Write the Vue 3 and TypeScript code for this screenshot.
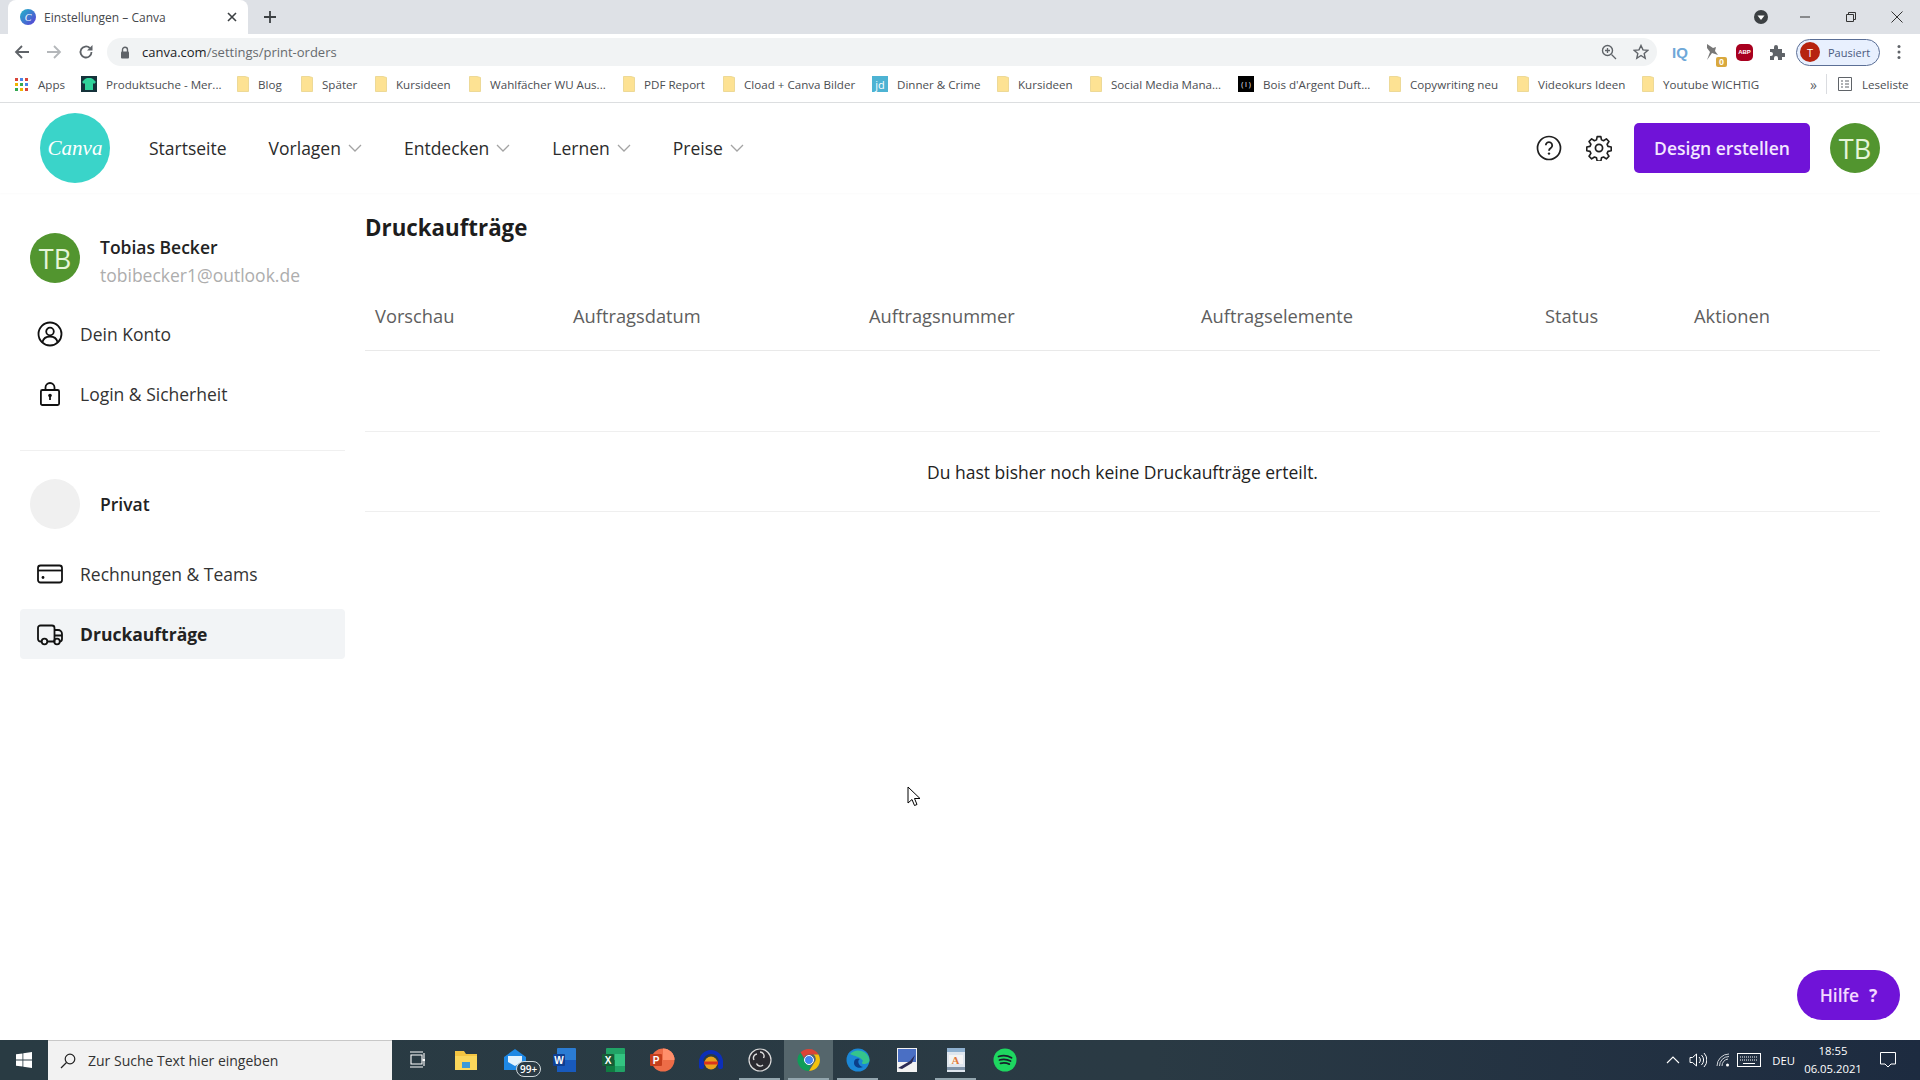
<script setup lang="ts">
const bookmarks = [
  { label: "Apps", icon: "apps", w: 66 },
  { label: "Produktsuche - Mer...", icon: "shirt", w: 156 },
  { label: "Blog", icon: "folder", w: 64 },
  { label: "Später", icon: "folder", w: 74 },
  { label: "Kursideen", icon: "folder", w: 94 },
  { label: "Wahlfächer WU Aus...", icon: "folder", w: 154 },
  { label: "PDF Report", icon: "folder", w: 100 },
  { label: "Cload + Canva Bilder", icon: "folder", w: 149 },
  { label: "Dinner & Crime", icon: "jd", w: 125 },
  { label: "Kursideen", icon: "folder", w: 93 },
  { label: "Social Media Mana...", icon: "folder", w: 148 },
  { label: "Bois d'Argent Duft...", icon: "bois", w: 151 },
  { label: "Copywriting neu", icon: "folder", w: 128 },
  { label: "Videokurs Ideen", icon: "folder", w: 125 },
  { label: "Youtube WICHTIG", icon: "folder", w: 160 },
];

const appDots = ["#d9453a", "#4a86e8", "#d9453a", "#f1b500", "#34a853", "#4a86e8", "#34a853", "#f1b500", "#d9453a"];

const navItems = [
  { label: "Startseite", caret: false },
  { label: "Vorlagen", caret: true },
  { label: "Entdecken", caret: true },
  { label: "Lernen", caret: true },
  { label: "Preise", caret: true },
];

const columns = ["Vorschau", "Auftragsdatum", "Auftragsnummer", "Auftragselemente", "Status", "Aktionen"];
</script>

<template>
  <div class="screen">
    <!-- Browser chrome -->
    <div class="tabstrip">
      <div class="tab">
        <span class="favicon">C</span>
        <span class="tab-title">Einstellungen – Canva</span>
        <svg class="tab-close" width="10" height="10" viewBox="0 0 10 10">
          <path d="M1 1l8 8M9 1l-8 8" stroke="#3c4043" stroke-width="1.6" />
        </svg>
      </div>
      <svg class="tab-plus" width="14" height="14" viewBox="0 0 14 14">
        <path d="M7 1v12M1 7h12" stroke="#3c4043" stroke-width="1.8" />
      </svg>
      <div class="win-controls">
        <svg width="16" height="16" viewBox="0 0 16 16">
          <circle cx="8" cy="8" r="7" fill="#3c4043" />
          <path d="M4.5 6.5h7L8 11z" fill="#fff" />
        </svg>
        <svg class="win-min" width="12" height="12" viewBox="0 0 12 12">
          <path d="M1 6h10" stroke="#333" stroke-width="1" />
        </svg>
        <svg class="win-max" width="12" height="12" viewBox="0 0 12 12">
          <path d="M1.5 3.5h7v7h-7zM3.5 3.5v-2h7v7h-2" fill="none" stroke="#333" stroke-width="1" />
        </svg>
        <svg class="win-close" width="14" height="14" viewBox="0 0 14 14">
          <path d="M1.5 1.5l11 11M12.5 1.5l-11 11" stroke="#333" stroke-width="1" />
        </svg>
      </div>
    </div>

    <div class="toolbar">
      <svg class="tool-btn" width="16" height="16" viewBox="0 0 16 16">
        <path d="M15 8H2M8 2L2 8l6 6" fill="none" stroke="#5f6368" stroke-width="1.8" />
      </svg>
      <svg class="tool-btn" width="16" height="16" viewBox="0 0 16 16">
        <path d="M1 8h13M8 2l6 6-6 6" fill="none" stroke="#b4b7ba" stroke-width="1.8" />
      </svg>
      <svg class="tool-btn" width="16" height="16" viewBox="0 0 16 16">
        <path d="M13.5 8A5.5 5.5 0 1 1 11.8 4" fill="none" stroke="#5f6368" stroke-width="1.8" />
        <path d="M14.5 1v5.5H9z" fill="#5f6368" />
      </svg>
      <div class="omnibox">
        <svg width="10" height="13" viewBox="0 0 10 13">
          <path d="M2.5 6V3.8a2.5 2.5 0 0 1 5 0V6" fill="none" stroke="#5f6368" stroke-width="1.4" />
          <rect x="1" y="5.5" width="8" height="7" rx="1" fill="#5f6368" />
        </svg>
        <span class="url"><b>canva.com</b>/settings/print-orders</span>
        <svg class="omni-zoom" width="16" height="16" viewBox="0 0 16 16">
          <circle cx="6.5" cy="6.5" r="5" fill="none" stroke="#5f6368" stroke-width="1.4" />
          <path d="M10.5 10.5L15 15M4 6.5h5M6.5 4v5" stroke="#5f6368" stroke-width="1.3" />
        </svg>
        <svg width="16" height="16" viewBox="0 0 16 16">
          <path d="M8 1.5l2 4.4 4.7.5-3.5 3.2 1 4.7L8 11.500l-4.200 2.800 1-4.700L1.300 6.400l4.700-.5z" fill="none" stroke="#5f6368" stroke-width="1.4" />
        </svg>
      </div>
      <span class="ext-iq">IQ</span>
      <div class="ext-pin">
        <svg width="16" height="18" viewBox="0 0 16 18">
          <path d="M3 1l6 4 3-1-1 4 3 4-6-2-5 7 3-8-3-4z" fill="#777" />
        </svg>
        <span class="ext-badge">0</span>
      </div>
      <span class="ext-abp">ABP</span>
      <svg class="ext-puzzle" width="16" height="16" viewBox="0 0 16 16">
        <path d="M1 5h4V3a2 2 0 0 1 4 0v2h4v4h2a2 2 0 0 1 0 4h-2v3H9v-2a2 2 0 0 0-4 0v2H1v-4h1a2 2 0 0 0 0-4H1z" fill="#5f6368" />
      </svg>
      <div class="profile">
        <span class="profile-pic">T</span>
        <span class="profile-label">Pausiert</span>
      </div>
      <svg class="menu-dots" width="4" height="16" viewBox="0 0 4 16">
        <circle cx="2" cy="2.500" r="1.500" fill="#5f6368" />
        <circle cx="2" cy="8" r="1.500" fill="#5f6368" />
        <circle cx="2" cy="13.500" r="1.500" fill="#5f6368" />
      </svg>
    </div>

    <div class="bookmarks">
      <div v-for="b in bookmarks" :key="b.label + b.w" class="bookmark" :style="{ width: b.w + 'px' }">
        <span class="bm-icon">
          <span v-if="b.icon === 'apps'" class="bm-apps">
            <i v-for="(c, i) in appDots" :key="i" :style="{ background: c }" />
          </span>
          <svg v-else-if="b.icon === 'folder'" width="12" height="16" viewBox="0 0 12 16">
            <path d="M0.500 0.500h7.500l3.500 1v14H0.500z" fill="#fde293" stroke="#e8d38a" stroke-width="0.800" />
          </svg>
          <svg v-else-if="b.icon === 'shirt'" width="16" height="16" viewBox="0 0 16 16">
            <rect width="16" height="16" fill="#15323a" />
            <path d="M4 3l2-1h4l2 1 3 3-2 2-1-1v7H4V7L3 8 1 6z" fill="#2fd39a" />
          </svg>
          <span v-else-if="b.icon === 'jd'" class="bm-jd">jd</span>
          <span v-else class="bm-bois">( I )</span>
        </span>
        <span class="bm-label">{{ b.label }}</span>
      </div>
      <span class="bm-more">»</span>
      <span class="bm-sep" />
      <svg class="bm-list" width="14" height="14" viewBox="0 0 14 14">
        <path d="M0.500 0.500h13v13h-13zM3 4h2M7 4h4M3 7h2M7 7h4M3 10h2M7 10h4" fill="none" stroke="#5f6368" stroke-width="1" />
      </svg>
      <span class="bm-label">Leseliste</span>
    </div>

    <!-- Canva page -->
    <header class="site-header">
      <div class="logo"><span>Canva</span></div>
      <nav class="site-nav">
        <a v-for="n in navItems" :key="n.label" class="nav-link">
          {{ n.label }}
          <svg v-if="n.caret" width="14" height="8" viewBox="0 0 14 8">
            <path d="M1 1l6 6 6-6" fill="none" stroke="#a3a3a3" stroke-width="1.300" />
          </svg>
        </a>
      </nav>
      <div class="header-right">
        <svg class="hdr-icon" width="26" height="26" viewBox="0 0 26 26">
          <circle cx="13" cy="13" r="11.500" fill="none" stroke="#1f1f1f" stroke-width="1.700" />
          <path d="M9.800 10.300a3.200 3.200 0 1 1 5 2.700c-1.200.8-1.800 1.400-1.800 2.700" fill="none" stroke="#1f1f1f" stroke-width="1.800" />
          <circle cx="13" cy="18.600" r="1.200" fill="#1f1f1f" />
        </svg>
        <svg class="hdr-icon gear" width="26" height="26" viewBox="0 0 24 24">
          <circle cx="12" cy="12" r="3.300" fill="none" stroke="#1f1f1f" stroke-width="1.600" />
          <path d="M10.300 1.500h3.400l.6 3 1.900.8 2.600-1.700 2.400 2.400-1.700 2.600.8 1.900 3 .6v3.400l-3 .6-.8 1.900 1.700 2.600-2.400 2.400-2.600-1.700-1.900.8-.6 3h-3.400l-.6-3-1.900-.8-2.600 1.700-2.400-2.400 1.700-2.600-.8-1.900-3-.6v-3.400l3-.6.8-1.900-1.700-2.600 2.400-2.400 2.600 1.700 1.900-.8z" fill="none" stroke="#1f1f1f" stroke-width="1.500" stroke-linejoin="round" />
        </svg>
        <button class="create-btn">Design erstellen</button>
        <div class="avatar">TB</div>
      </div>
    </header>

    <main class="page">
      <aside class="sidebar">
        <div class="account">
          <div class="avatar">TB</div>
          <div class="account-text">
            <div class="account-name">Tobias Becker</div>
            <div class="account-mail">tobibecker1@outlook.de</div>
          </div>
        </div>
        <a class="side-link">
          <svg width="26" height="26" viewBox="0 0 26 26">
            <circle cx="13" cy="13" r="11.500" fill="none" stroke="#111" stroke-width="1.800" />
            <circle cx="13" cy="10.500" r="3.800" fill="none" stroke="#111" stroke-width="1.800" />
            <path d="M5.500 21c1-4 4-5.500 7.500-5.500s6.500 1.500 7.500 5.500" fill="none" stroke="#111" stroke-width="1.800" />
          </svg>
          Dein Konto
        </a>
        <a class="side-link">
          <svg width="26" height="26" viewBox="0 0 26 26">
            <path d="M8.500 9V6.500a4.500 4.500 0 0 1 9 0V9" fill="none" stroke="#111" stroke-width="1.800" />
            <rect x="3.900" y="9" width="18.200" height="15" rx="1.500" fill="none" stroke="#111" stroke-width="1.800" />
            <circle cx="13" cy="14.500" r="1.800" fill="#111" />
            <path d="M13 15v4" stroke="#111" stroke-width="1.800" />
          </svg>
          Login &amp; Sicherheit
        </a>
        <div class="side-divider" />
        <div class="account private">
          <div class="avatar blank" />
          <div class="account-name">Privat</div>
        </div>
        <a class="side-link">
          <svg width="26" height="26" viewBox="0 0 26 26">
            <rect x="1" y="4.500" width="24" height="17" rx="2.500" fill="none" stroke="#111" stroke-width="1.800" />
            <path d="M1 9.500h24" stroke="#111" stroke-width="1.800" />
            <circle cx="6" cy="16.500" r="1.400" fill="#111" />
          </svg>
          Rechnungen &amp; Teams
        </a>
        <a class="side-link active">
          <svg width="26" height="26" viewBox="0 0 26 26">
            <path d="M4.500 20.500H3.500A2.500 2.500 0 0 1 1 18V7a2.500 2.500 0 0 1 2.500-2.500H15A2.500 2.500 0 0 1 17.500 7v13.500h-7" fill="none" stroke="#111" stroke-width="1.800" />
            <path d="M17.500 9H21a4 4 0 0 1 4 4v5a2.500 2.500 0 0 1-2.500 2.500M17.500 14.500H25" fill="none" stroke="#111" stroke-width="1.800" />
            <circle cx="7.500" cy="20.500" r="2.800" fill="none" stroke="#111" stroke-width="1.800" />
            <circle cx="20" cy="20.500" r="2.800" fill="none" stroke="#111" stroke-width="1.800" />
          </svg>
          Druckaufträge
        </a>
      </aside>

      <section class="content">
        <h1 class="title">Druckaufträge</h1>
        <div class="table-head">
          <div v-for="c in columns" :key="c">{{ c }}</div>
        </div>
        <div class="table-row" />
        <div class="table-empty">Du hast bisher noch keine Druckaufträge erteilt.</div>
      </section>

      <button class="help-btn">Hilfe<span>?</span></button>
      <svg class="cursor" width="14" height="22" viewBox="0 0 14 22">
        <path d="M1 1v16l4-3.500 2.500 6 2.500-1-2.500-6H13z" fill="#fff" stroke="#000" stroke-width="1" />
      </svg>
    </main>

    <!-- Windows taskbar -->
    <footer class="taskbar">
      <div class="start">
        <svg width="16" height="16" viewBox="0 0 16 16">
          <path d="M0 2.300l6.500-.9v6.200H0zM7.300 1.300L16 0v7.600H7.300zM0 8.400h6.500v6.200L0 13.700zM7.300 8.400H16V16l-8.700-1.300z" fill="#fff" />
        </svg>
      </div>
      <div class="search">
        <svg width="16" height="16" viewBox="0 0 16 16">
          <circle cx="10" cy="6" r="4.800" fill="none" stroke="#222" stroke-width="1.200" />
          <path d="M6.500 9.500L1 15" stroke="#222" stroke-width="1.200" />
        </svg>
        Zur Suche Text hier eingeben
      </div>
      <div class="task-icons">
        <div class="task">
          <svg width="16" height="18" viewBox="0 0 16 18">
            <path d="M2 4h11v9H2zM1 1h13M1 16h13M15 2v5M15 10v5" fill="none" stroke="#fff" stroke-width="1.100" />
            <rect x="13.500" y="7.500" width="2.500" height="2.500" fill="#fff" />
          </svg>
        </div>
        <div class="task">
          <svg width="24" height="24" viewBox="0 0 24 24">
            <path d="M1 3h9l2 3h11v16H1z" fill="#f4c542" />
            <path d="M1 8h22v14H1z" fill="#fbd75b" />
            <rect x="8" y="14" width="8" height="6" fill="#3b9ad9" />
          </svg>
        </div>
        <div class="task">
          <svg width="24" height="24" viewBox="0 0 24 24">
            <path d="M1 9l11-8 11 8v13H1z" fill="#1e88e5" />
            <path d="M5 8h14v6l-7 4-7-4z" fill="#e3f2fd" />
          </svg>
          <span class="mail-badge">99+</span>
        </div>
        <div class="task">
          <svg width="24" height="26" viewBox="0 0 24 26">
            <rect x="5" y="1" width="19" height="24" rx="1" fill="#2b7cd3" />
            <rect x="5" y="13" width="19" height="12" fill="#185abd" />
            <rect x="1" y="7" width="12" height="12" rx="1" fill="#103f91" />
            <text x="7" y="16.500" class="ico-letter">W</text>
          </svg>
        </div>
        <div class="task">
          <svg width="24" height="26" viewBox="0 0 24 26">
            <rect x="5" y="1" width="19" height="24" rx="1" fill="#21a366" />
            <rect x="14" y="7" width="10" height="12" fill="#33c481" />
            <rect x="5" y="13" width="9" height="12" fill="#107c41" />
            <rect x="1" y="7" width="12" height="12" rx="1" fill="#185c37" />
            <text x="7" y="16.500" class="ico-letter">X</text>
          </svg>
        </div>
        <div class="task">
          <svg width="26" height="26" viewBox="0 0 26 26">
            <circle cx="14" cy="13" r="11.500" fill="#ed6c47" />
            <path d="M14 1.500A11.500 11.500 0 0 1 25.500 13H14z" fill="#ff8f6b" />
            <rect x="1" y="7" width="12" height="12" rx="1" fill="#c43e1c" />
            <text x="7" y="16.500" class="ico-letter">P</text>
          </svg>
        </div>
        <div class="task">
          <svg width="26" height="26" viewBox="0 0 26 26">
            <path d="M3 19a10 10 0 0 1 20 0" fill="none" stroke="#0d2fb8" stroke-width="4" transform="translate(0 -4)" />
            <rect x="1" y="13" width="5" height="9" rx="2" fill="#0d2fb8" />
            <rect x="20" y="13" width="5" height="9" rx="2" fill="#0d2fb8" />
            <circle cx="13" cy="16" r="6.500" fill="#e8a21c" />
            <path d="M6 16h14" stroke="#d8341d" stroke-width="3" />
          </svg>
        </div>
        <div class="task">
          <svg width="24" height="24" viewBox="0 0 24 24">
            <circle cx="12" cy="12" r="11" fill="#2a2a30" stroke="#dcdcdc" stroke-width="1.200" />
            <path d="M12 4a4 4 0 0 1 3.500 6M15 17a4 4 0 0 1-6.500-1.500M6 12a4 4 0 0 1 3-6" fill="none" stroke="#dcdcdc" stroke-width="1.400" />
          </svg>
        </div>
        <div class="task current">
          <svg width="24" height="24" viewBox="0 0 24 24">
            <path d="M12 1a11 11 0 0 1 9.500 5.500H12a5.500 5.500 0 0 0-5 3.200L3.500 4.500A11 11 0 0 1 12 1z" fill="#db4437" />
            <path d="M21.500 6.500A11 11 0 0 1 12 23l5-8a5.500 5.500 0 0 0-.5-8.500z" fill="#f4c20d" />
            <path d="M3.500 4.500L8 13a5 5 0 0 0 5.500 4L12 23A11 11 0 0 1 3.500 4.500z" fill="#0f9d58" />
            <circle cx="12" cy="12" r="4.500" fill="#4285f4" stroke="#fff" stroke-width="1" />
          </svg>
        </div>
        <div class="task">
          <svg width="24" height="24" viewBox="0 0 24 24">
            <circle cx="12" cy="12" r="11.500" fill="#1b87d6" />
            <path d="M4 6a11.500 11.500 0 0 1 19.500 6c0 3-3 4-5.500 4-3 0-2-2-1-3-2-4-9-5-13-7z" fill="#35c48c" />
            <path d="M8 15a4 4 0 0 1 6-4c-3 1-2 7 3 8-4 2-9 0-9-4z" fill="#0b3f8a" />
          </svg>
        </div>
        <div class="task">
          <svg width="20" height="24" viewBox="0 0 20 24">
            <rect width="20" height="24" fill="#f2f2f2" />
            <rect x="1" y="1" width="18" height="13" fill="#4a6fc4" />
            <path d="M1 20l12-7 5-6-3 8-10 6z" fill="#2b2b55" />
          </svg>
        </div>
        <div class="task">
          <svg width="18" height="24" viewBox="0 0 18 24">
            <rect width="18" height="24" fill="#dfe6ee" />
            <rect width="18" height="4" fill="#8fb0cf" />
            <rect x="2" y="7" width="14" height="9" fill="#f4f4f4" />
            <rect y="19" width="18" height="3" fill="#7f93a8" />
          </svg>
          <span class="a-mark">A</span>
        </div>
        <div class="task">
          <svg width="24" height="24" viewBox="0 0 24 24">
            <circle cx="12" cy="12" r="11.500" fill="#1ed760" />
            <path d="M5.500 8.500c4-1.200 9-1 13 1.200M6.500 12c3.500-1 7.500-.8 11 1M7.500 15.300c3-.8 6-.6 8.800.8" fill="none" stroke="#17212b" stroke-width="1.800" stroke-linecap="round" />
          </svg>
        </div>
      </div>
      <div class="tray">
        <svg class="t-caret" width="14" height="8" viewBox="0 0 14 8">
          <path d="M1 7l6-6 6 6" fill="none" stroke="#fff" stroke-width="1.100" />
        </svg>
        <svg class="t-sound" width="18" height="16" viewBox="0 0 18 16">
          <path d="M1 5.500h2.500L7.500 2v12l-4-3.500H1zM10 5a4 4 0 0 1 0 6M12.500 3a7 7 0 0 1 0 10M15 1a10 10 0 0 1 0 14" fill="none" stroke="#fff" stroke-width="1" />
        </svg>
        <svg class="t-wifi" width="14" height="14" viewBox="0 0 14 14">
          <path d="M1 13a12 12 0 0 1 12-12M3.500 13A9.500 9.500 0 0 1 13 3.500M6 13a7 7 0 0 1 6-7" fill="none" stroke="#cfd3d8" stroke-width="1" />
          <circle cx="11.500" cy="12" r="1.500" fill="#fff" />
        </svg>
        <svg class="t-keys" width="24" height="14" viewBox="0 0 24 14">
          <rect x="0.500" y="0.500" width="23" height="13" fill="none" stroke="#fff" stroke-width="1" />
          <path d="M3 4h18M3 7h18" stroke="#fff" stroke-width="1" stroke-dasharray="1 1" />
          <path d="M6 10.500h12" stroke="#fff" stroke-width="1" />
        </svg>
        <span class="tray-lang">DEU</span>
        <div class="clock">
          <div>18:55</div>
          <div>06.05.2021</div>
        </div>
        <svg width="16" height="16" viewBox="0 0 16 16">
          <path d="M0.500 0.500h15v11.500h-4.500L8 15l-3-3H0.500z" fill="none" stroke="#fff" stroke-width="1" />
        </svg>
      </div>
    </footer>
  </div>
</template>

<style scoped>
* {
  box-sizing: border-box;
}

.screen {
  display: flex;
  flex-direction: column;
  width: 1920px;
  height: 1080px;
  overflow: hidden;
  background: #fff;
  font-family: "Open Sans", "Liberation Sans", sans-serif;
  color: #222;
}

/* ── Chrome ─────────────────────────── */

.tabstrip {
  display: flex;
  align-items: center;
  height: 34px;
  flex-shrink: 0;
  padding-left: 8px;
  background: #dee1e6;
}

.tab {
  display: flex;
  align-items: center;
  width: 240px;
  height: 34px;
  padding-left: 12px;
  background: #fff;
  border-radius: 8px 8px 0 0;
  font-size: 12px;
  color: #45484c;
}

.favicon {
  display: flex;
  align-items: center;
  justify-content: center;
  width: 16px;
  height: 16px;
  border-radius: 50%;
  background: linear-gradient(135deg, #21b8c9, #5b3ad6);
  color: #fff;
  font: italic 10px "Liberation Serif", serif;
}

.tab-title {
  margin-left: 8px;
  flex: 1;
}

.tab-close {
  margin-right: 11px;
}

.tab-plus {
  margin-left: 15px;
}

.win-controls {
  display: flex;
  align-items: center;
  margin-left: auto;
  padding-right: 16px;
}

.win-min {
  margin-left: 30px;
}

.win-max {
  margin-left: 34px;
}

.win-close {
  margin-left: 33px;
}

.toolbar {
  display: flex;
  align-items: center;
  height: 34px;
  flex-shrink: 0;
  padding: 2px 0 0 14px;
  background: #fff;
}

.tool-btn {
  margin-right: 16px;
}

.omnibox {
  display: flex;
  align-items: center;
  width: 1550px;
  height: 28px;
  margin-left: -3px;
  padding: 0 8px 0 13px;
  border-radius: 14px;
  background: #f1f3f4;
}

.url {
  margin-left: 12px;
  flex: 1;
  font-size: 13px;
  color: #666a6e;
}

.url b {
  font-weight: 400;
  color: #202124;
}

.omni-zoom {
  margin-right: 16px;
}

.ext-iq {
  margin-left: 15px;
  width: 24px;
  font: 700 15px "Liberation Sans", sans-serif;
  color: #6fa8d8;
}

.ext-pin {
  position: relative;
  display: flex;
  margin-left: 8px;
  width: 20px;
}

.ext-badge {
  position: absolute;
  right: -3px;
  bottom: -6px;
  padding: 0 3px;
  border-radius: 2px;
  background: #d9a83e;
  font: 700 9px "Liberation Sans", sans-serif;
  color: #fff;
}

.ext-abp {
  display: flex;
  align-items: center;
  justify-content: center;
  width: 17px;
  height: 17px;
  margin-left: 12px;
  border-radius: 5px;
  background: #a8001f;
  font: 700 6px "Liberation Sans", sans-serif;
  color: #fff;
}

.ext-puzzle {
  margin-left: 16px;
}

.profile {
  display: flex;
  align-items: center;
  width: 84px;
  height: 27px;
  margin-left: 11px;
  padding-left: 3px;
  border: 1px solid #5b6f96;
  border-radius: 14px;
  background: #e8f0fe;
  font-size: 11px;
  color: #4a5a80;
}

.profile-pic {
  display: flex;
  align-items: center;
  justify-content: center;
  width: 20px;
  height: 20px;
  margin-right: 8px;
  border-radius: 50%;
  background: #b6230f;
  color: #fff;
}

.menu-dots {
  margin-left: 17px;
}

.bookmarks {
  display: flex;
  align-items: center;
  height: 35px;
  flex-shrink: 0;
  padding: 0 0 2px 15px;
  border-bottom: 1px solid #dcdee0;
  background: #fff;
  font-size: 11.6px;
  color: #4b4e52;
}

.bookmark {
  display: flex;
  align-items: center;
  flex-shrink: 0;
}

.bm-icon {
  display: flex;
  align-items: center;
  margin-right: 9px;
}

.bm-label {
  white-space: nowrap;
}

.bm-apps {
  display: grid;
  grid-template-columns: repeat(3, 3px);
  gap: 2px;
  margin-right: 1px;
}

.bm-apps i {
  width: 3px;
  height: 3px;
}

.bm-jd {
  display: flex;
  align-items: center;
  justify-content: center;
  width: 16px;
  height: 16px;
  background: #4db3d3;
  color: #fff;
  font-size: 11px;
}

.bm-bois {
  display: flex;
  align-items: center;
  justify-content: center;
  width: 16px;
  height: 16px;
  background: #000;
  color: #fff;
  font-size: 7px;
}

.bm-more {
  margin-left: 8px;
  font-size: 14px;
  color: #5f6368;
}

.bm-sep {
  width: 1px;
  height: 20px;
  margin-left: 9px;
  background: #dadce0;
}

.bm-list {
  margin: 0 10px 0 11px;
}

/* ── Canva header ───────────────────── */

.site-header {
  display: flex;
  align-items: center;
  height: 90px;
  flex-shrink: 0;
  padding: 0 40px;
  box-shadow: 0 1px 2px rgba(0, 0, 0, 0.02);
}

.logo {
  display: flex;
  align-items: center;
  justify-content: center;
  width: 70px;
  height: 70px;
  border-radius: 50%;
  background: #3ad4c9;
  color: #fff;
  font: italic 21px "Liberation Serif", serif;
}

.site-nav {
  display: flex;
  align-items: center;
  gap: 42px;
  margin-left: 39px;
  font-size: 17.5px;
  color: #2b2b2b;
}

.nav-link {
  display: flex;
  align-items: center;
  gap: 7px;
}

.header-right {
  display: flex;
  align-items: center;
  margin-left: auto;
}

.hdr-icon {
  margin-right: 24px;
}

.hdr-icon.gear {
  margin-right: 22px;
}

.create-btn {
  width: 176px;
  height: 50px;
  margin-right: 20px;
  border: none;
  border-radius: 5px;
  background: #7013d8;
  font: 600 17.5px "Open Sans", sans-serif;
  color: #f3e6ff;
}

.avatar {
  display: flex;
  align-items: center;
  justify-content: center;
  width: 50px;
  height: 50px;
  flex-shrink: 0;
  border-radius: 50%;
  background: #52952f;
  font-size: 27px;
  color: #e6f5d8;
}

.avatar.blank {
  background: #f0f0f0;
}

/* ── Page ───────────────────────────── */

.page {
  position: relative;
  display: flex;
  flex: 1;
  min-height: 0;
}

.sidebar {
  display: flex;
  flex-direction: column;
  width: 325px;
  margin-left: 20px;
  padding-top: 39px;
}

.account {
  display: flex;
  align-items: center;
  gap: 20px;
  padding-left: 10px;
  margin-bottom: 15px;
}

.account-text {
  margin: 3px 0 -3px;
}

.account.private {
  margin-bottom: 10px;
}

.account-name {
  font-size: 17.5px;
  font-weight: 600;
  color: #222;
}

.account-mail {
  margin-top: 4px;
  font-size: 17.5px;
  color: #adadad;
}

.side-link {
  display: flex;
  align-items: center;
  gap: 17px;
  height: 50px;
  margin-top: 10px;
  padding-left: 17px;
  border-radius: 4px;
  font-size: 17.5px;
  color: #333;
}

.side-link.active {
  background: #f2f4f6;
  font-weight: 700;
  color: #222;
}

.side-divider {
  height: 1px;
  margin: 31px 0 28px;
  background: #f0f0f0;
}

.content {
  flex: 1;
  margin: 0 40px 0 20px;
}

.title {
  margin: 18px 0 0;
  font-size: 22.3px;
  font-weight: 700;
  line-height: 34px;
  color: #1d1d1d;
}

.table-head {
  display: grid;
  grid-template-columns: 198px 296px 332px 344px 149px 1fr;
  align-items: center;
  height: 70px;
  margin-top: 36px;
  padding-left: 10px;
  border-bottom: 1px solid #e9e9e9;
  font-size: 18.3px;
  color: #5e5e5e;
}

.table-row {
  height: 81px;
  border-bottom: 1px solid #efefef;
}

.table-empty {
  display: flex;
  align-items: center;
  justify-content: center;
  height: 80px;
  border-bottom: 1px solid #efefef;
  font-size: 17.5px;
  color: #222;
}

.help-btn {
  position: absolute;
  right: 20px;
  bottom: 20px;
  width: 103px;
  height: 50px;
  border: none;
  border-radius: 25px;
  background: #7013d8;
  font: 600 17.5px "Open Sans", sans-serif;
  color: #f3d9ff;
}

.help-btn span {
  margin-left: 10px;
  font-weight: 700;
}

.cursor {
  position: absolute;
  left: 907px;
  top: 593px;
}

/* ── Taskbar ────────────────────────── */

.taskbar {
  display: flex;
  align-items: center;
  height: 40px;
  flex-shrink: 0;
  background: linear-gradient(90deg, #293b43, #2a3a44 60%, #1d2b40);
}

.start {
  display: flex;
  align-items: center;
  justify-content: center;
  width: 48px;
}

.search {
  display: flex;
  align-items: center;
  gap: 12px;
  width: 344px;
  height: 40px;
  padding-left: 12px;
  border-top: 1px solid #c8c8c8;
  background: #f2f2f2;
  font-size: 14px;
  color: #333;
}

.task-icons {
  display: flex;
}

.task {
  position: relative;
  display: flex;
  align-items: center;
  justify-content: center;
  width: 49px;
  height: 40px;
}

.task:nth-child(8)::after,
.task:nth-child(9)::after,
.task:nth-child(10)::after,
.task:nth-child(12)::after {
  content: "";
  position: absolute;
  left: 4px;
  right: 4px;
  bottom: 0;
  height: 2px;
  background: #93a6ae;
}

.task.current {
  background: #55666c;
}

.mail-badge {
  position: absolute;
  left: 26px;
  bottom: 3px;
  padding: 0 3px;
  border: 1px solid #cfd8dc;
  border-radius: 8px;
  background: #2a3a44;
  font-size: 10px;
  font-weight: 600;
  color: #fff;
}

.ico-letter {
  font: 700 10px "Liberation Sans", sans-serif;
  fill: #fff;
  text-anchor: middle;
}

.a-mark {
  position: absolute;
  font: 700 11px "Liberation Serif", serif;
  color: #e07a3c;
}

.tray {
  display: flex;
  align-items: center;
  margin-left: auto;
  padding-right: 24px;
  color: #fff;
  font-size: 11.3px;
}

.t-caret,
.t-sound {
  margin-right: 9px;
}

.t-wifi {
  margin-right: 7px;
}

.t-keys {
  margin-right: 11px;
}

.tray-lang {
  margin-right: 8px;
}

.clock {
  width: 60px;
  margin-right: 17px;
  text-align: center;
  line-height: 18px;
}
</style>
